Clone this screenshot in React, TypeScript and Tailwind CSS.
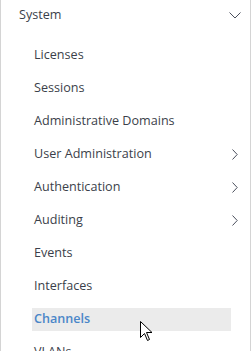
import React from "react";

const items = [
  { label: "Licenses" },
  { label: "Sessions" },
  { label: "Administrative Domains" },
  { label: "User Administration", sub: true },
  { label: "Authentication", sub: true },
  { label: "Auditing", sub: true },
  { label: "Events" },
  { label: "Interfaces" },
  { label: "Channels", active: true },
  { label: "VLANs" },
];

const ChevronRight = () => (
  <svg width="6" height="11" viewBox="0 0 6 11" className="text-[#4a4f5c]">
    <path d="M0.5 0.5 L5.2 5.5 L0.5 10.5" fill="none" stroke="currentColor" strokeWidth="1" />
  </svg>
);

const ChevronDown = () => (
  <svg width="12" height="7" viewBox="0 0 12 7" className="text-[#4a4f5c]">
    <path d="M0.5 0.5 L6 6 L11.5 0.5" fill="none" stroke="currentColor" strokeWidth="1" />
  </svg>
);

const Cursor = () => (
  <svg width="14" height="21" viewBox="0 0 14 21" className="absolute left-[139px] top-[321px]">
    <path
      d="M0.5 0.5 L0.5 16.5 L4.5 12.5 L7.5 19.5 L9.5 18.5 L6.5 11.5 L12 11.5 Z"
      fill="#fff"
      stroke="#000"
      strokeWidth="1"
      strokeLinejoin="miter"
    />
  </svg>
);

export default function App() {
  return (
    <div className="relative w-[251px] h-[351px] overflow-hidden bg-white border-l border-r border-[#d4d4d4] font-['Open_Sans',sans-serif] text-[12.6px] text-[#3b3f4a]">
      <div className="flex items-center justify-between h-[30px] pl-[18px] pr-[9px]">
        <span>System</span>
        <ChevronDown />
      </div>
      <ul className="pt-[9px]">
        {items.map((it) => (
          <li key={it.label} className="flex items-center h-[33px] pl-[31px]">
            <div
              className={
                "flex items-center h-[23px] w-[199px] pl-[2px] " +
                (it.active ? "bg-[#ebebeb] text-[#4a86c8] font-semibold" : "")
              }
            >
              {it.label}
            </div>
            {it.sub && (
              <span className="flex items-center ml-[1px]">
                <ChevronRight />
              </span>
            )}
          </li>
        ))}
      </ul>
      <Cursor />
    </div>
  );
}
